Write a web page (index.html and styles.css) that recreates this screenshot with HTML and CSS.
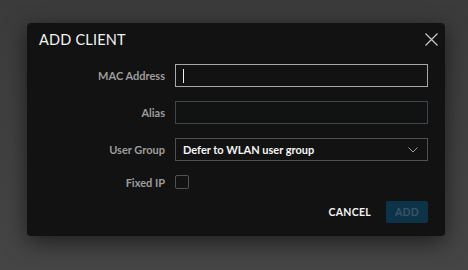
FILE: index.html
```html
<!DOCTYPE html>
<html>
<head>
<meta charset="utf-8">
<link rel="stylesheet" href="styles.css">
</head>
<body>
<div class="dialog">
  <div class="header">
    <div class="title">ADD CLIENT</div>
    <svg class="close" width="13" height="13" viewBox="0 0 13 13"><path d="M0.5 0.5 L12.5 12.5 M12.5 0.5 L0.5 12.5" stroke="#c8c8c8" stroke-width="1.2" fill="none"/></svg>
  </div>
  <div class="form">
    <label class="label">MAC Address</label>
    <div class="input focused"><span class="caret"></span></div>
    <label class="label">Alias</label>
    <div class="input"></div>
    <label class="label">User Group</label>
    <div class="input select"><span class="value">Defer to WLAN user group</span>
      <svg class="chev" width="10" height="6" viewBox="0 0 10 6"><path d="M0.5 0.5 L5 5 L9.5 0.5" stroke="#9a9a9a" stroke-width="1" fill="none"/></svg>
    </div>
    <label class="label">Fixed IP</label>
    <div class="checkcell"><span class="checkbox"></span></div>
  </div>
  <div class="footer">
    <button class="btn cancel">CANCEL</button>
    <button class="btn add">ADD</button>
  </div>
</div>
</body>
</html>
```
FILE: styles.css
```css
html, body { margin: 0; padding: 0; }
body {
  width: 468px; height: 270px;
  background: linear-gradient(#3b3b3b, #454545);
  font-family: Lato, "Open Sans", sans-serif;
  overflow: hidden;
}
.dialog {
  margin: 23px 0 0 27px;
  width: 418px; height: 213px;
  box-sizing: border-box;
  background: #121212;
  border-radius: 4px;
  box-shadow: 0 6px 22px rgba(0,0,0,0.55);
  padding: 0 17px 0 12px;
  display: flex; flex-direction: column;
}
.header {
  height: 32px;
  display: flex; align-items: center; justify-content: space-between;
}
.title { color: #f2f2f2; font-size: 14.5px; letter-spacing: 0.2px; }
.close { margin-right: -10px; }
.form {
  margin-top: 9px;
  display: grid;
  grid-template-columns: 126px 253px;
  column-gap: 10px; row-gap: 14px;
  align-items: center;
}
.label { color: #9c9c9c; font-size: 11px; font-weight: 700; text-align: right; }
.input {
  height: 23px; box-sizing: border-box;
  border: 1px solid #3a474c;
  display: flex; align-items: center;
  padding: 0 7px;
}
.input.focused { border-color: #a8a8a8; }
.caret { width: 1px; height: 14px; background: #f0f0f0; }
.select { border-color: #4a5256; justify-content: space-between; padding-right: 9px; }
.value { color: #f4f4f4; font-size: 11px; font-weight: 700; }
.checkcell { display: flex; }
.checkbox { width: 14px; height: 14px; box-sizing: border-box; border: 1px solid #4e5356; border-radius: 2px; }
.footer {
  margin-top: 12px;
  display: flex; justify-content: flex-end; align-items: center; gap: 15px;
}
.btn { font-family: Lato, sans-serif; font-weight: 700; font-size: 10.5px; border: 0; letter-spacing: 0.3px; }
.cancel { background: none; color: #f2f2f2; padding: 0; }
.add { background: #0c3347; color: #385565; width: 42px; height: 22px; border-radius: 2px; padding: 0; }
```
